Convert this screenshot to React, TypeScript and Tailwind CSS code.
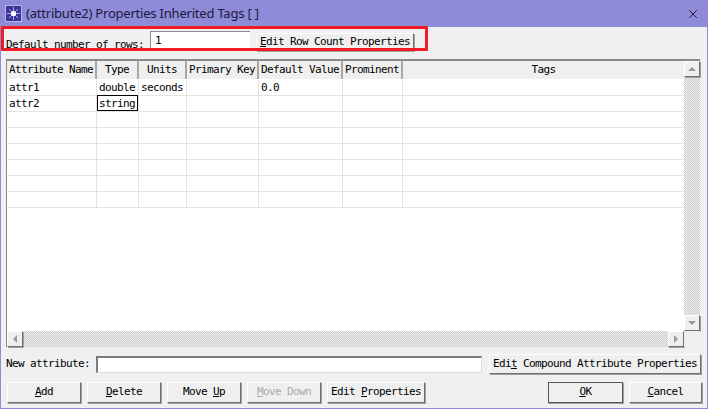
import { X } from "lucide-react";
import type { ReactNode } from "react";

const columns = [
  { label: "Attribute Name", width: "w-[90px]" },
  { label: "Type", width: "w-[42px]" },
  { label: "Units", width: "w-[48px]" },
  { label: "Primary Key", width: "w-[72px]" },
  { label: "Default Value", width: "w-[84px]" },
  { label: "Prominent", width: "w-[60px]" },
  { label: "Tags", width: "flex-1" },
];

const rows = [
  ["attr1", "double", "seconds", "", "0.0", "", ""],
  ["attr2", "string", "", "", "", "", ""],
  ["", "", "", "", "", "", ""],
  ["", "", "", "", "", "", ""],
  ["", "", "", "", "", "", ""],
  ["", "", "", "", "", "", ""],
  ["", "", "", "", "", "", ""],
  ["", "", "", "", "", "", ""],
];

const raised =
  "border border-t-white border-l-white border-r-[#6f6f6f] border-b-[#6f6f6f] shadow-[1px_1px_0_#a0a0a0]";
const checker =
  "bg-[conic-gradient(#cbcbcb_25%,#f0f0f0_0_50%,#cbcbcb_0_75%,#f0f0f0_0)] bg-[length:2px_2px]";

function Btn({
  width,
  children,
  disabled,
  primary,
}: {
  width: string;
  children: ReactNode;
  disabled?: boolean;
  primary?: boolean;
}) {
  return (
    <div
      className={`${width} flex h-[21px] items-center justify-center bg-[#efefef] ${raised} ${
        primary ? "outline outline-1 -outline-offset-1 outline-[#555]" : ""
      } ${disabled ? "text-[#a9a9a9]" : "text-black"}`}
    >
      <span className="whitespace-pre">{children}</span>
    </div>
  );
}

function ScrollArrow({ path }: { path: string }) {
  return (
    <div className={`flex size-4 shrink-0 items-center justify-center bg-[#efefef] ${raised}`}>
      <svg width="8" height="8" viewBox="0 0 8 8">
        <path d={path} fill="#9a9a9a" />
      </svg>
    </div>
  );
}

export default function App() {
  return (
    <div className="flex h-[409px] w-[708px] flex-col overflow-hidden bg-[#8f8bd8] font-['DejaVu_Sans_Mono',monospace] text-[11px] tracking-[-0.62px] text-black">
      <div className="flex h-[27px] shrink-0 items-center pl-[5px] pr-[8px] font-['Noto_Sans',sans-serif] text-[13px] tracking-[-0.21px] text-[#1a1a40]">
        <svg width="17" height="17" viewBox="0 0 17 17" className="shrink-0">
          <rect width="17" height="17" fill="#3b3596" />
          <rect x="0.5" y="0.5" width="16" height="16" fill="none" stroke="#b9b7e8" />
          <path d="M8.5 2v13M2 8.5h13M4 4l9 9M13 4l-9 9" stroke="#a9a6ee" strokeWidth="1" />
          <circle cx="8.5" cy="8.5" r="2.6" fill="#fff" />
        </svg>
        <span className="ml-[4px]">(attribute2) Properties Inherited Tags [ ]</span>
        <X className="ml-auto size-[14px] text-black" strokeWidth={1.3} />
      </div>

      <div className="relative mx-px mb-px flex flex-1 flex-col bg-[#f0f0f0] px-[5px]">
        <div className="flex h-[26px] shrink-0 items-start pt-[4px]">
          <span className="mt-[6px] w-[144px] whitespace-pre">Default number of rows:</span>
          <div className="h-[20px] w-[100px] border-l border-t border-[#8a8a8a] bg-white pl-[4px] pt-[1px]">1</div>
          <div className="ml-[6px] mt-[2px]">
            <div className={`flex h-[18px] w-[158px] items-center justify-center bg-[#efefef] ${raised}`}>
              <span className="whitespace-pre">
                <u>E</u>dit Row Count Properties
              </span>
            </div>
          </div>
        </div>

        <div className="mr-[2px] mt-[6px] flex h-[288px] shrink-0 flex-col border-l border-t-2 border-[#8a8a8a]">
          <div className="flex min-h-0 flex-1">
            <div className="flex min-w-0 flex-1 flex-col bg-white">
              <div className="flex h-[18px] shrink-0 bg-[#efefef]">
                {columns.map((col) => (
                  <div
                    key={col.label}
                    className={`${col.width} flex items-center justify-center border-r-2 border-[#a8a8a8] whitespace-pre last:border-r-0`}
                  >
                    {col.label}
                  </div>
                ))}
              </div>
              {rows.map((row, i) => (
                <div key={i} className={`flex h-4 shrink-0 border-b border-[#e3e3e3] ${i === 0 ? "mt-px" : ""}`}>
                  {columns.map((col, j) => (
                    <div
                      key={col.label}
                      className={`${col.width} relative border-r border-[#e3e3e3] pl-[2px] leading-[16px] whitespace-pre last:border-r-0`}
                    >
                      {row[j]}
                      {i === 1 && j === 1 && (
                        <div className="absolute -top-px left-0 h-4 w-full border border-black" />
                      )}
                    </div>
                  ))}
                </div>
              ))}
              <div className="flex-1" />
            </div>
            <div className={`flex w-4 shrink-0 flex-col justify-between ${checker}`}>
              <ScrollArrow path="M4 2L8 6H0Z" />
              <ScrollArrow path="M4 6L0 2H8Z" />
            </div>
          </div>
          <div className="flex h-4 shrink-0 items-stretch">
            <div className={`flex min-w-0 flex-1 justify-between ${checker}`}>
              <ScrollArrow path="M2 4L6 0V8Z" />
              <ScrollArrow path="M6 4L2 0V8Z" />
            </div>
            <div className="w-4 shrink-0 bg-[#f0f0f0]" />
          </div>
        </div>

        <div className="mt-[7px] flex h-[20px] shrink-0 items-center">
          <span className="w-[90px] whitespace-pre">New attribute:</span>
          <div className="h-[17px] w-[386px] border-l-2 border-t-2 border-[#7a7a7a] border-b border-r border-b-[#dcdcdc] border-r-[#dcdcdc] bg-white" />
          <div className={`ml-[7px] flex h-[20px] w-[212px] items-center justify-center bg-[#efefef] ${raised}`}>
            <span className="whitespace-pre">
              Edi<u>t</u> Compound Attribute Properties
            </span>
          </div>
        </div>

        <div className="mt-[8px] flex items-center">
          <div className="flex gap-[6px] pl-px">
            <Btn width="w-[74px]"><u>A</u>dd</Btn>
            <Btn width="w-[74px]"><u>D</u>elete</Btn>
            <Btn width="w-[74px]">Move <u>U</u>p</Btn>
            <Btn width="w-[74px]" disabled><u>M</u>ove Down</Btn>
            <Btn width="w-[98px]">Edit <u>P</u>roperties</Btn>
          </div>
          <div className="ml-auto flex gap-[6px]">
            <Btn width="w-[75px]" primary><u>O</u>K</Btn>
            <Btn width="w-[73px]"><u>C</u>ancel</Btn>
          </div>
        </div>

        <div className="pointer-events-none absolute -top-px left-0 h-[25px] w-[427px] rounded-[1px] border-[3px] border-[#ee1c25]" />
      </div>
    </div>
  );
}
